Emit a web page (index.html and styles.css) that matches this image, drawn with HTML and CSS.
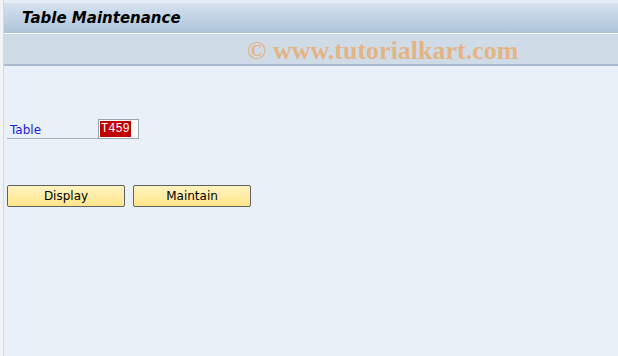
FILE: index.html
```html
<!DOCTYPE html>
<html lang="en">

<head>
  <meta charset="UTF-8">
  <title>Table Maintenance</title>
  <link rel="stylesheet" href="styles.css">
</head>

<body>
  <main class="window">
    <header class="title-bar">
      <h1>Table Maintenance</h1>
    </header>
    <div class="toolbar">
      <span class="watermark">&copy; www.tutorialkart.com</span>
    </div>
    <section class="content">
      <div class="field">
        <label class="field-label" for="table">Table</label>
        <div class="field-input"><span class="selected">T459</span></div>
      </div>
      <div class="actions">
        <button class="btn">Display</button>
        <button class="btn">Maintain</button>
      </div>
    </section>
  </main>
</body>

</html>
```

FILE: styles.css
```css
* {
  padding: 0;
  margin: 0;
  box-sizing: border-box;
}

body {
  width: 618px;
  height: 356px;
  overflow: hidden;
  background-color: #f1f3f6;
  font-family: Tahoma, "DejaVu Sans", sans-serif;
  padding-left: 3px;
}

.window {
  height: 100%;
  display: flex;
  flex-direction: column;
  border-left: 1px solid #d3dae3;
  background-color: #e9f0f8;
}

.title-bar {
  height: 34px;
  border-top: 3px solid #e9eef5;
  border-bottom: 1px solid #f3f6fa;
  background: linear-gradient(#d6e2ef, #adc3da);
  padding-left: 18px;
  display: flex;
  align-items: center;
}

.title-bar h1 {
  font-family: "DejaVu Sans", sans-serif;
  font-size: 15px;
  font-weight: bold;
  font-style: italic;
  color: #000;
}

.toolbar {
  height: 32px;
  background-color: #cfdce8;
  border-bottom: 2px solid #a9b9cc;
  display: flex;
  align-items: center;
  padding: 4px 0 0 243px;
}

.watermark {
  font-family: "Liberation Serif", serif;
  font-weight: bold;
  font-size: 26px;
  line-height: 28px;
  color: #e8b07a;
  opacity: 0.9;
}

.content {
  padding: 53px 0 0 3px;
}

.field {
  display: flex;
  align-items: flex-end;
}

.field-label {
  width: 91px;
  height: 19px;
  padding: 3px 0 0 3px;
  border-bottom: 1px solid #a8b0b8;
  color: #1d1dd6;
  font-size: 12px;
}

.field-input {
  width: 41px;
  height: 20px;
  display: flex;
  align-items: center;
  background-color: #fff;
  border: 1px solid #9aa4ae;
  padding-left: 1px;
}

.selected {
  background-color: #c00000;
  color: #fff;
  font-family: "Liberation Mono", monospace;
  font-size: 12px;
  line-height: 15px;
  padding: 1px 1px 0;
}

.actions {
  display: flex;
  gap: 8px;
  margin-top: 46px;
}

.btn {
  width: 118px;
  height: 22px;
  border: 1px solid #5e6266;
  border-radius: 2px;
  background: linear-gradient(#fff3bf, #ffe58a);
  font-family: Tahoma, "DejaVu Sans", sans-serif;
  font-size: 12px;
  color: #000;
}
```
